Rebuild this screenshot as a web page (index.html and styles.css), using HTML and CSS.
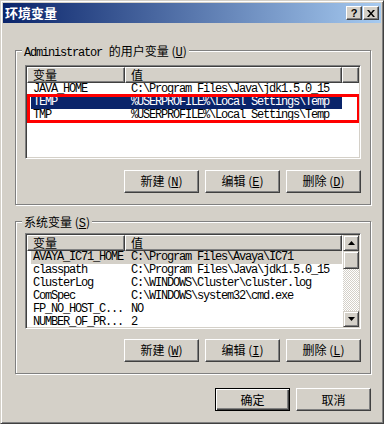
FILE: index.html
```html
<!DOCTYPE html>
<html lang="zh-CN">
<head>
    <meta charset="UTF-8">
    <meta name="viewport" content="width=device-width, initial-scale=1.0">
    <title>环境变量</title>
    <link rel="stylesheet" href="styles.css">
</head>
<body>
    <div class="window">
        <div class="titlebar">
            <span class="title">环境变量</span>
            <div class="title-buttons">
                <span class="tbtn help">?</span>
                <span class="tbtn close">
                    <svg width="8" height="7" viewBox="0 0 8 7"><path d="M0 0h2l2 2.5L6 0h2L5 3.5 8 7H6L4 4.5 2 7H0l3-3.5z" fill="#000"/></svg>
                </span>
            </div>
        </div>

        <div class="content">
            <!-- user variables -->
            <div class="group user">
                <div class="group-title"><span class="mono">Administrator</span> 的用户变量 (<u>U</u>)</div>
                <div class="list user-list">
                    <div class="list-main">
                        <div class="list-head">
                            <div class="hcell col-name">变量</div>
                            <div class="hcell col-value">值</div>
                            <div class="hcell col-fill"></div>
                        </div>
                        <div class="row">
                            <span class="c1">JAVA_HOME</span>
                            <span class="c2">C:\Program Files\Java\jdk1.5.0_15</span>
                        </div>
                        <div class="marked">
                            <div class="row selected">
                                <span class="c1">TEMP</span>
                                <span class="c2">%USERPROFILE%\Local Settings\Temp</span>
                            </div>
                            <div class="row">
                                <span class="c1">TMP</span>
                                <span class="c2">%USERPROFILE%\Local Settings\Temp</span>
                            </div>
                        </div>
                    </div>
                </div>
                <div class="actions">
                    <button class="btn">新建 (<u>N</u>)</button>
                    <button class="btn">编辑 (<u>E</u>)</button>
                    <button class="btn">删除 (<u>D</u>)</button>
                </div>
            </div>

            <!-- system variables -->
            <div class="group system">
                <div class="group-title">系统变量 (<u>S</u>)</div>
                <div class="list system-list">
                    <div class="list-main">
                        <div class="list-head">
                            <div class="hcell col-name">变量</div>
                            <div class="hcell col-value">值</div>
                        </div>
                        <div class="row inactive">
                            <span class="c1">AVAYA_IC71_HOME</span>
                            <span class="c2">C:\Program Files\Avaya\IC71</span>
                        </div>
                        <div class="row">
                            <span class="c1">classpath</span>
                            <span class="c2">C:\Program Files\Java\jdk1.5.0_15</span>
                        </div>
                        <div class="row">
                            <span class="c1">ClusterLog</span>
                            <span class="c2">C:\WINDOWS\Cluster\cluster.log</span>
                        </div>
                        <div class="row">
                            <span class="c1">ComSpec</span>
                            <span class="c2">C:\WINDOWS\system32\cmd.exe</span>
                        </div>
                        <div class="row">
                            <span class="c1">FP_NO_HOST_C...</span>
                            <span class="c2">NO</span>
                        </div>
                        <div class="row">
                            <span class="c1">NUMBER_OF_PR...</span>
                            <span class="c2">2</span>
                        </div>
                    </div>
                    <div class="scrollbar">
                        <div class="sb-btn">
                            <svg width="7" height="4" viewBox="0 0 7 4"><path d="M3.5 0L7 4H0z" fill="#000"/></svg>
                        </div>
                        <div class="sb-thumb"></div>
                        <div class="sb-track"></div>
                        <div class="sb-btn">
                            <svg width="7" height="4" viewBox="0 0 7 4"><path d="M0 0h7L3.5 4z" fill="#000"/></svg>
                        </div>
                    </div>
                </div>
                <div class="actions">
                    <button class="btn">新建 (<u>W</u>)</button>
                    <button class="btn">编辑 (<u>I</u>)</button>
                    <button class="btn">删除 (<u>L</u>)</button>
                </div>
            </div>

            <div class="dialog-actions">
                <button class="btn default">确定</button>
                <button class="btn">取消</button>
            </div>
        </div>
    </div>
</body>
</html>
```

FILE: styles.css
```css
* {
    box-sizing: border-box;
}
body {
    margin: 0;
    background: #ffffff;
    font: 12px/13px "Liberation Mono", "Noto Sans CJK SC", monospace;
    color: #000;
}
.window {
    width: 384px;
    height: 424px;
    background: #d4d0c8;
    border: 1px solid;
    border-color: #d4d0c8 #404040 #404040 #d4d0c8;
    box-shadow: inset 1px 1px #fff, inset -1px -1px #808080;
    padding: 2px;
}
.titlebar {
    height: 20px;
    background: linear-gradient(to right, #0a246a, #a6caf0);
    display: flex;
    align-items: center;
    justify-content: space-between;
    padding: 0 2px 0 2px;
}
.title {
    color: #fff;
    font: bold 13px/20px "Noto Sans CJK SC", sans-serif;
}
.title-buttons {
    display: flex;
    gap: 1px;
}
.tbtn {
    width: 16px;
    height: 14px;
    background: #d4d0c8;
    border: 1px solid;
    border-color: #fff #404040 #404040 #fff;
    box-shadow: inset -1px -1px #808080;
    display: flex;
    align-items: center;
    justify-content: center;
}
.tbtn.help {
    font: bold 11px/12px "Liberation Sans", sans-serif;
}

.content {
    padding: 0 10px 0 12px;
}
.group {
    border: 1px solid #808080;
    box-shadow: inset 1px 1px #fff, 1px 1px #fff;
    padding: 0 9px 11px 9px;
}
.group.user {
    margin-top: 27px;
}
.group.system {
    margin-top: 16px;
}
.group-title {
    width: fit-content;
    margin: -7px 0 0 -3px;
    padding: 0 2px;
    background: #d4d0c8;
    font-family: "Noto Sans CJK SC", sans-serif;
    font-size: 12px;
    line-height: 13px;
    height: 13px;
}
.group-title u,
.btn u {
    font-family: "Liberation Mono", monospace;
}
.mono {
    font-family: "Liberation Mono", monospace;
    font-size: 12px;
    letter-spacing: -1.2px;
    margin-right: 4px;
}

/* list view */
.list {
    background: #fff;
    border: 1px solid;
    border-color: #808080 #fff #fff #808080;
    box-shadow: inset 1px 1px #404040, inset -1px -1px #d4d0c8;
    padding: 1px;
    display: flex;
    overflow: hidden;
}
.user-list {
    margin-top: 8px;
    height: 94px;
}
.system-list {
    margin-top: 5px;
    height: 96px;
}
.list-main {
    flex: 1;
    overflow: hidden;
}
.list-head {
    display: flex;
    height: 16px;
}
.hcell {
    background: #d4d0c8;
    border: 1px solid;
    border-color: #fff #404040 #404040 #fff;
    box-shadow: inset -1px -1px #808080;
    padding-left: 5px;
    font-family: "Noto Sans CJK SC", sans-serif;
    font-size: 12px;
    line-height: 13px;
}
.col-name {
    width: 98px;
}
.col-value {
    width: 217px;
}
.col-fill {
    flex: 1;
}
.row {
    display: flex;
    height: 13px;
    margin-left: 4px;
    width: 311px;
    font-family: "Liberation Mono", monospace;
    font-size: 12px;
    line-height: 13px;
    letter-spacing: -1.2px;
    white-space: nowrap;
}
.c1 {
    width: 94px;
    padding-left: 2px;
    overflow: hidden;
}
.c2 {
    padding-left: 6px;
}
.row.selected {
    background: #0a246a;
    color: #fff;
}
.row.inactive {
    background: #d4d0c8;
}
.marked {
    position: relative;
}
.marked::after {
    content: "";
    position: absolute;
    top: -2px;
    bottom: -1px;
    left: 0;
    right: -1px;
    border: 3px solid #ff0000;
}

/* scrollbar */
.scrollbar {
    width: 16px;
    display: flex;
    flex-direction: column;
}
.sb-btn,
.sb-thumb {
    background: #d4d0c8;
    border: 1px solid;
    border-color: #d4d0c8 #404040 #404040 #d4d0c8;
    box-shadow: inset 1px 1px #fff, inset -1px -1px #808080;
}
.sb-btn {
    height: 16px;
    display: flex;
    align-items: center;
    justify-content: center;
}
.sb-thumb {
    height: 18px;
}
.sb-track {
    flex: 1;
    background: repeating-conic-gradient(#fff 0 25%, #d4d0c8 0 50%) 0 0 / 2px 2px;
}

/* buttons */
.actions {
    display: flex;
    justify-content: flex-end;
    gap: 6px;
    margin-top: 11px;
}
.group.system .actions {
    margin-top: 10px;
}
.btn {
    width: 75px;
    height: 23px;
    padding: 0;
    background: #d4d0c8;
    border: 1px solid;
    border-color: #fff #404040 #404040 #fff;
    box-shadow: inset -1px -1px #808080;
    font-family: "Noto Sans CJK SC", sans-serif;
    font-size: 12px;
    line-height: 13px;
    color: #000;
}
.btn.default {
    border-color: #000;
    box-shadow: inset 1px 1px #fff, inset -1px -1px #404040, inset -2px -2px #808080;
}
.dialog-actions {
    display: flex;
    justify-content: flex-end;
    gap: 6px;
    margin-top: 14px;
}
```
